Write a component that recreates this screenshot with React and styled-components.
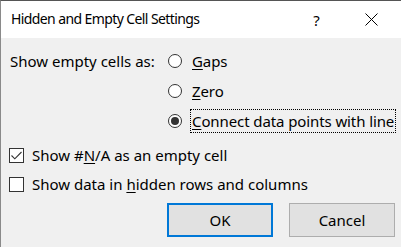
import React, { useState } from 'react';
import styled, { createGlobalStyle } from 'styled-components';

const GlobalStyle = createGlobalStyle`
  html, body {
    margin: 0;
    padding: 0;
    background: #f0f0f0;
  }
  * {
    box-sizing: border-box;
  }
`;

const Dialog = styled.div`
  width: 401px;
  height: 247px;
  background: #f0f0f0;
  border-top: 1px solid #555555;
  border-left: 1px solid #8a8a8a;
  font-family: "Noto Sans", "Open Sans", sans-serif;
  font-size: 15px;
  color: #000;
  display: flex;
  flex-direction: column;
  overflow: hidden;
`;

const TitleBar = styled.div`
  height: 37px;
  background: #ffffff;
  display: flex;
  align-items: center;
  padding-left: 10px;
`;

const Title = styled.div`
  flex: 1;
  font-size: 14px;
  letter-spacing: -0.6px;
  line-height: 20px;
  padding-bottom: 2px;
  white-space: nowrap;
`;

const TitleButton = styled.div`
  width: ${(p) => p.$w}px;
  height: 36px;
  display: flex;
  align-items: center;
  justify-content: center;
  font-size: 15px;
  flex-shrink: 0;
`;

const Body = styled.div`
  padding: 11px 4px 0 7px;
  display: flex;
  flex-direction: column;
`;

const OptionsRow = styled.div`
  display: flex;
`;

const GroupLabel = styled.div`
  width: 160px;
  flex-shrink: 0;
  height: 24px;
  line-height: 24px;
  padding-left: 2px;
  white-space: nowrap;
`;

const RadioGroup = styled.div`
  display: flex;
  flex-direction: column;
  gap: 6px;
`;

const Choice = styled.label`
  display: flex;
  align-items: center;
  height: 24px;
  cursor: default;
`;

const Circle = styled.span`
  width: 14px;
  height: 14px;
  border-radius: 50%;
  border: 1px solid #333333;
  background: #ffffff;
  display: flex;
  align-items: center;
  justify-content: center;
  margin-right: 8px;
  flex-shrink: 0;

  &::after {
    content: "";
    width: 8px;
    height: 8px;
    border-radius: 50%;
    background: #333333;
    display: ${(p) => (p.$on ? 'block' : 'none')};
  }
`;

const ChoiceText = styled.span`
  display: block;
  height: 24px;
  line-height: 22px;
  padding: 0 1px;
  letter-spacing: -0.1px;
  white-space: nowrap;
  border: 1px dotted ${(p) => (p.$focus ? '#000' : 'transparent')};
`;

const Key = styled.u`
  text-decoration-thickness: 1px;
  text-underline-offset: 2px;
`;

const CheckRow = styled.label`
  display: flex;
  align-items: center;
  height: 24px;
  white-space: pre;
  margin-top: ${(p) => p.$mt}px;
`;

const Box = styled.span`
  width: 15px;
  height: 15px;
  border: 1px solid #333333;
  background: #ffffff;
  display: flex;
  align-items: center;
  justify-content: center;
  margin-right: 8px;
  margin-left: 1px;
  flex-shrink: 0;
`;

const Buttons = styled.div`
  display: flex;
  justify-content: flex-end;
  gap: 16px;
  margin-top: 7px;
  padding-right: 2px;
`;

const Button = styled.button`
  width: 106px;
  height: 34px;
  font-family: inherit;
  font-size: 15px;
  color: #000;
  background: #e1e1e1;
  border: ${(p) => (p.$primary ? '2px solid #0078d7' : '1px solid #adadad')};
  padding: 0;
  outline: none;
`;

const radios = [
  { key: 'G', rest: 'aps' },
  { key: 'Z', rest: 'ero' },
  { key: 'C', rest: 'onnect data points with line' },
];

const App = () => {
  const [mode, setMode] = useState(2);
  const [showNA, setShowNA] = useState(true);
  const [hidden, setHidden] = useState(false);

  return (
    <>
      <GlobalStyle />
      <Dialog>
        <TitleBar>
          <Title>Hidden and Empty Cell Settings</Title>
          <TitleButton $w={49}>?</TitleButton>
          <TitleButton $w={60}>
            <svg width="13" height="13" viewBox="0 0 13 13">
              <path d="M0.5 0.5 L12.5 12.5 M12.5 0.5 L0.5 12.5" stroke="#000" strokeWidth="1" fill="none" />
            </svg>
          </TitleButton>
        </TitleBar>
        <Body>
          <OptionsRow>
            <GroupLabel>Show empty cells as:</GroupLabel>
            <RadioGroup>
              {radios.map((r, i) => (
                <Choice key={r.key} onClick={() => setMode(i)}>
                  <Circle $on={mode === i} />
                  <ChoiceText $focus={i === 2}>
                    <Key>{r.key}</Key>
                    {r.rest}
                  </ChoiceText>
                </Choice>
              ))}
            </RadioGroup>
          </OptionsRow>
          <CheckRow $mt={10} onClick={() => setShowNA(!showNA)}>
            <Box>
              {showNA && (
                <svg width="11" height="9" viewBox="0 0 11 9">
                  <path d="M0.5 4.5 L3.8 7.8 L10.5 1" stroke="#333" strokeWidth="1.1" fill="none" />
                </svg>
              )}
            </Box>
            <span>
              Show #<Key>N</Key>/A as an empty cell
            </span>
          </CheckRow>
          <CheckRow $mt={5} onClick={() => setHidden(!hidden)}>
            <Box />
            <span>
              Show data in <Key>h</Key>idden rows and columns
            </span>
          </CheckRow>
          <Buttons>
            <Button $primary>OK</Button>
            <Button>Cancel</Button>
          </Buttons>
        </Body>
      </Dialog>
    </>
  );
};

export default App;
